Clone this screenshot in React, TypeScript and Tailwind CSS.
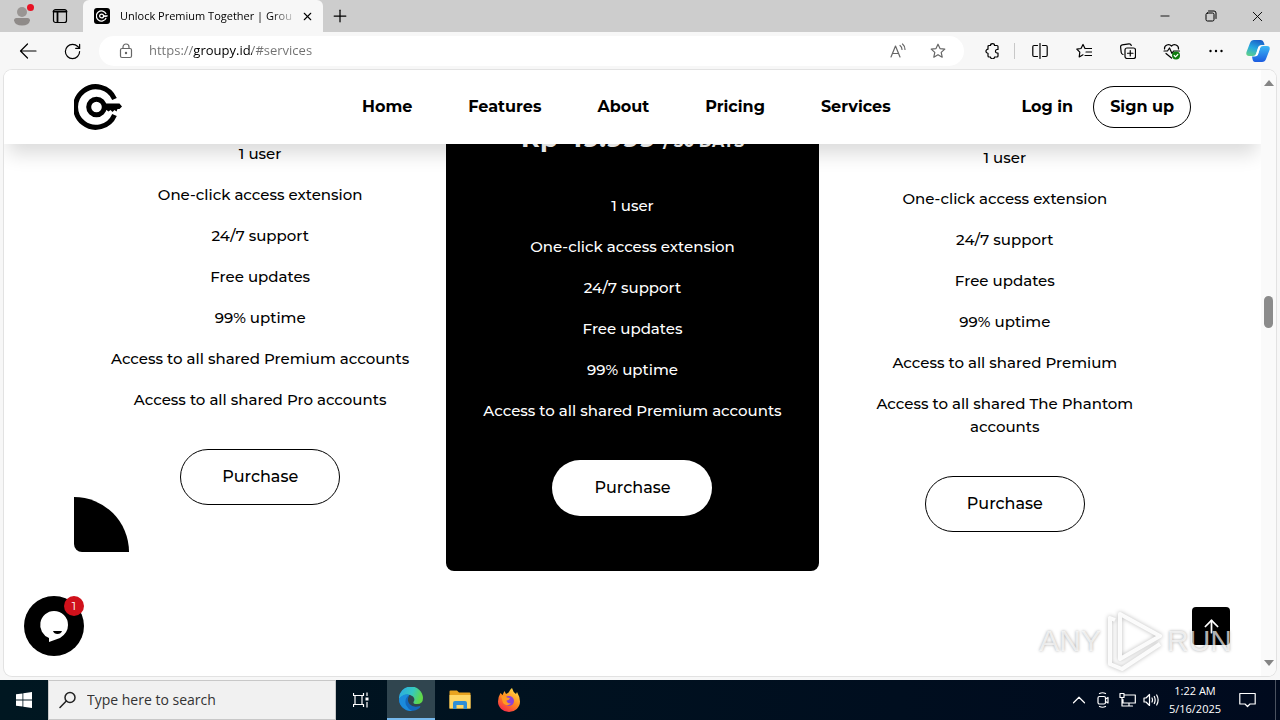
import React from 'react';
import { Plus, X, Minus, ArrowLeft, ArrowUp, RotateCw, ChevronUp } from 'lucide-react';

interface Plan {
  id: string;
  price?: string;
  period?: string;
  features: string[];
  featured?: boolean;
  accent?: boolean;
  spacing: string;
}

const common = ['1 user', 'One-click access extension', '24/7 support', 'Free updates', '99% uptime'];

const plans: Plan[] = [
  {
    id: 'pro',
    features: [...common, 'Access to all shared Premium accounts', 'Access to all shared Pro accounts'],
    accent: true,
    spacing: 'pt-[22px] pb-[47px]',
  },
  {
    id: 'premium',
    price: 'Rp 49.999',
    period: '/ 30 DAYS',
    features: [...common, 'Access to all shared Premium accounts'],
    featured: true,
    spacing: 'pb-[55px]',
  },
  {
    id: 'phantom',
    features: [...common, 'Access to all shared Premium', 'Access to all shared The Phantom accounts'],
    spacing: 'pt-[26px] pb-[47px]',
  },
];

const navLinks = ['Home', 'Features', 'About', 'Pricing', 'Services'];

function KeyLogo({ className }: { className?: string }) {
  return (
    <svg viewBox="0 0 48 48" className={className} fill="none" stroke="currentColor" aria-hidden="true">
      <path d="M40.500 16A20.300 20.300 0 1 0 40.500 32" strokeWidth="5" />
      <circle cx="22.500" cy="24" r="7.800" strokeWidth="5" />
      <path d="M30 20.500H45.500L48 23.500L45.500 26H43.500L42.500 28.500L40.500 27L38.500 29L36.500 27L34.500 28.500L32.500 27H30Z" fill="currentColor" stroke="none" />
    </svg>
  );
}

const line = {
  fill: 'none',
  stroke: 'currentColor',
  strokeWidth: 1.2,
  strokeLinecap: 'round' as const,
  strokeLinejoin: 'round' as const,
  'aria-hidden': true,
};

const starPath = 'M8 1.200L10 5.600L14.800 6.100L11.200 9.400L12.200 14.200L8 11.700L3.800 14.200L4.800 9.400L1.200 6.100L6 5.600Z';

function TabStrip() {
  return (
    <div className="flex h-8 items-stretch bg-[#cdcdcd]">
      <button aria-label="Profile" className="relative flex w-11 items-center justify-center">
        <svg viewBox="0 0 18 20" className="h-5 w-[18px]" fill="#8f8b89" aria-hidden="true">
          <circle cx="9" cy="6" r="5" fill="#999593" />
          <path d="M1 14.500Q1 12 3.500 12H14.500Q17 12 17 14.500Q16 19.500 9 19.500T1 14.500Z" />
        </svg>
        <span className="absolute right-2.5 top-1 h-[7px] w-[7px] rounded-full bg-[#e81224]" />
      </button>
      <button aria-label="Tab actions" className="flex w-[39px] items-center pl-2">
        <svg viewBox="0 0 16 16" className="h-4 w-4" {...line}>
          <rect x="1.500" y="1.500" width="13" height="13" rx="2" />
          <path d="M1.500 3.500H14.500M5.500 4V14" strokeWidth="1.800" />
        </svg>
      </button>
      <div className="flex w-60 items-center rounded-t-md bg-[#f7f7f7] pl-[11px] pr-2">
        <span className="mr-2.5 flex h-4 w-4 shrink-0 items-center justify-center rounded-[3px] bg-black text-white">
          <KeyLogo className="h-3 w-3" />
        </span>
        <span className="whitespace-nowrap text-[11px] [mask-image:linear-gradient(to_right,black_88%,rgba(0,0,0,0.2))]">
          Unlock Premium Together | Grou
        </span>
        <button aria-label="Close tab" className="ml-auto flex h-4 w-4 shrink-0 items-center justify-center">
          <X size={13} strokeWidth={2} />
        </button>
      </div>
      <button aria-label="New tab" className="flex w-[34px] items-center justify-center">
        <Plus size={20} strokeWidth={1.500} />
      </button>
      <div className="ml-auto flex">
        <button aria-label="Minimize" className="flex w-[46px] items-center justify-center">
          <Minus size={14} strokeWidth={1.500} />
        </button>
        <button aria-label="Restore" className="flex w-[46px] items-center justify-center">
          <svg viewBox="0 0 12 12" className="h-3 w-3" {...line} strokeWidth="1">
            <rect x="1" y="3" width="8" height="8" rx="1.500" />
            <path d="M3.500 1H9Q11 1 11 3V8.500" />
          </svg>
        </button>
        <button aria-label="Close" className="flex w-[46px] items-center justify-center">
          <X size={17} strokeWidth={1.300} />
        </button>
      </div>
    </div>
  );
}

const toolButton = 'flex h-8 w-11 shrink-0 items-center justify-center';

function Toolbar() {
  return (
    <div className="flex h-[38px] items-center bg-[#f7f7f7] pl-1.5 pr-0.5">
      <button aria-label="Back" className={toolButton}>
        <svg viewBox="0 0 18 16" className="h-4 w-[18px]" {...line}>
          <path d="M17 8H1.500M8.500 1L1.500 8L8.500 15" />
        </svg>
      </button>
      <button aria-label="Refresh" className={toolButton}>
        <RotateCw size={19} strokeWidth={1.500} />
      </button>
      <div className="ml-[5px] mr-1.5 flex h-[30px] flex-1 items-center rounded-full bg-white pl-5 pr-[18px] text-[#666]">
        <svg viewBox="0 0 14 16" className="mr-4 h-4 w-3.5" {...line}>
          <rect x="1.500" y="5.500" width="11" height="9" rx="1.500" />
          <path d="M4 5.500V4A3 3 0 0 1 10 4V5.500" />
          <circle cx="7" cy="10" r="0.600" fill="currentColor" />
        </svg>
        <input
          aria-label="Address"
          defaultValue="https://groupy.id/#services"
          className="min-w-0 flex-1 bg-[linear-gradient(to_right,#707070_44px,#000_44px,#000_103px,#707070_103px)] bg-clip-text text-[13px] text-transparent outline-none"
        />
        <button aria-label="Read aloud" className="mr-6">
          <svg viewBox="0 0 16 16" className="h-4 w-4" {...line}>
            <path d="M1 14L5.500 3L10 14M2.500 10.500H8.500M10 2.500Q12 4 12 6.500M12.500 1Q15 3 15 6.500" />
          </svg>
        </button>
        <button aria-label="Add to favorites">
          <svg viewBox="0 0 16 16" className="h-4 w-4" {...line}>
            <path d={starPath} />
          </svg>
        </button>
      </div>
      <button aria-label="Extensions" className={toolButton}>
        <svg viewBox="0 0 16 16" className="h-4 w-4" {...line}>
          <path d="M5 2.500H6.500A2 1.800 0 0 1 10.500 2.500H13Q14 2.500 14 3.500V6.500H12.800A1.800 1.800 0 0 0 12.800 10H14V13Q14 14 13 14H10.500A2 1.800 0 0 1 6.500 14H5Q4 14 4 13V10.300A2 2 0 0 1 4 6.200V3.500Q4 2.500 5 2.500Z" />
        </svg>
      </button>
      <span className="h-4 w-1 shrink-0 border-l border-[#c8c8c8]" />
      <button aria-label="Split screen" className={toolButton}>
        <svg viewBox="0 0 16 16" className="h-4 w-4" {...line}>
          <path d="M8 0.500V15.500M5.500 2.500H2Q0.800 2.500 0.800 3.700V12.300Q0.800 13.500 2 13.500H5.500M10.500 2.500H14Q15.200 2.500 15.200 3.700V12.300Q15.200 13.500 14 13.500H10.500" />
        </svg>
      </button>
      <button aria-label="Favorites" className={toolButton}>
        <svg viewBox="0 0 16 16" className="h-4 w-4" {...line}>
          <path d="M9 5.500L7 1.500L5 5.500L0.800 6.100L3.800 9.200L3.200 14L7 11.800M9 5.500H15.500M10 9H15.500M9 12.500H15.500" />
        </svg>
      </button>
      <button aria-label="Collections" className={toolButton}>
        <svg viewBox="0 0 16 16" className="h-4 w-4" {...line}>
          <rect x="5" y="5" width="10.500" height="10.500" rx="2" />
          <path d="M10.250 7.500V13M7.500 10.250H13M3 11.500Q1.500 11 1.200 9.500L0.600 4Q0.500 2.200 2.200 1.800L9 0.800Q10.800 0.700 11.300 2.500" />
        </svg>
      </button>
      <button aria-label="Browser essentials" className={toolButton}>
        <svg viewBox="0 0 18 17" className="h-[17px] w-[18px]" {...line}>
          <path d="M1.500 6A4 4 0 0 1 8.500 3A4 4 0 0 1 15.500 6M1 8H4.500L6.500 5L9 10.500L10.500 8H16.500M3 10.500L8.500 15" />
          <circle cx="13" cy="12.500" r="4" fill="#107c10" stroke="none" />
          <path d="M11.200 12.500L12.500 13.800L14.800 11.500" stroke="#fff" />
        </svg>
      </button>
      <button aria-label="Settings and more" className={toolButton}>
        <svg viewBox="0 0 16 16" className="h-4 w-4" aria-hidden="true">
          <circle cx="2.500" cy="8" r="1.200" />
          <circle cx="8" cy="8" r="1.200" />
          <circle cx="13.500" cy="8" r="1.200" />
        </svg>
      </button>
      <button aria-label="Copilot" className="flex w-10 shrink-0 items-center justify-center">
        <svg viewBox="0 0 24 22" className="h-[22px] w-6" aria-hidden="true">
          <defs>
            <linearGradient id="copilot-a" x1="0.600" y1="0" x2="0.200" y2="1">
              <stop offset="0" stopColor="#1b62c9" />
              <stop offset="0.500" stopColor="#27a8e0" />
              <stop offset="1" stopColor="#5fd08a" />
            </linearGradient>
            <linearGradient id="copilot-b" x1="0" y1="0" x2="0" y2="1">
              <stop offset="0" stopColor="#3bb8f5" />
              <stop offset="1" stopColor="#1c5be0" />
            </linearGradient>
          </defs>
          <path d="M8 0H15Q17 0 18 3L18.500 5H15Q13 5 12 8L10 14Q9 16 7 16H3Q-0.500 16 0.500 12L4 3Q5 0 8 0Z" fill="url(#copilot-a)" />
          <path d="M16 22H9Q7 22 6.500 19L6 16.500H9Q11 16.500 12 14L14 8Q15 6 17 6H21Q24.500 6 23.500 10L20 19Q19 22 16 22Z" fill="url(#copilot-b)" />
          <path d="M12.500 6.500H14.500L12 14.500Q11.500 16 9.500 16L12 8Z" fill="#fff" />
        </svg>
      </button>
    </div>
  );
}

function SiteHeader() {
  return (
    <header className="relative z-10 flex h-[74px] shrink-0 items-center bg-white px-[70px] text-base font-bold shadow-[0_14px_18px_-4px_rgba(0,0,0,0.14)]">
      <a href="#home" aria-label="Groupy">
        <KeyLogo className="h-12 w-12" />
      </a>
      <nav className="ml-60 flex gap-14">
        {navLinks.map((link) => (
          <a key={link} href={`#${link.toLowerCase()}`}>
            {link}
          </a>
        ))}
      </nav>
      <div className="ml-auto flex items-center gap-5">
        <a href="#login">Log in</a>
        <a href="#signup" className="flex h-[42px] items-center rounded-full border border-black px-4">
          Sign up
        </a>
      </div>
    </header>
  );
}

function PlanCard({ plan }: { plan: Plan }) {
  return (
    <article
      className={`relative flex flex-col items-center rounded-b-lg px-8 text-center ${plan.spacing} ${
        plan.featured ? 'bg-black text-white' : 'bg-white text-black'
      }`}
    >
      {plan.price && (
        <h3 className="mb-[38px] whitespace-nowrap text-[26px] font-bold leading-9">
          {plan.price} <span className="text-base leading-none">{plan.period}</span>
        </h3>
      )}
      <ul className="mb-[38px] flex flex-col gap-[18px] text-[15px] font-medium leading-[23px]">
        {plan.features.map((feature) => (
          <li key={feature}>{feature}</li>
        ))}
      </ul>
      <button
        className={`h-14 w-40 rounded-full text-base font-medium text-black ${
          plan.featured ? 'bg-white' : 'border border-black'
        }`}
      >
        Purchase
      </button>
      {plan.accent && <span className="absolute bottom-0 left-0 h-[55px] w-[55px] rounded-bl-lg rounded-tr-[55px] bg-black" />}
    </article>
  );
}

function ChatButton() {
  return (
    <button aria-label="Open chat" className="absolute bottom-5 left-5 h-[60px] w-[60px] rounded-full bg-black">
      <svg viewBox="0 0 60 60" className="h-full w-full" aria-hidden="true">
        <path d="M30 15A14 14 0 0 1 44 29Q44 37 36 42L25 46V42A14 14 0 0 1 30 15Z" fill="#fff" />
        <path d="M29 35H38Q37 38 33.500 38T29 35Z" fill="#000" />
      </svg>
      <span className="absolute right-0 top-0 flex h-5 w-5 items-center justify-center rounded-full bg-[#d0111b] text-xs text-white">1</span>
    </button>
  );
}

function Watermark() {
  return (
    <div className="pointer-events-none absolute bottom-1 right-11 z-20 flex items-center gap-1 font-['Liberation_Sans',sans-serif] text-3xl leading-none text-white/70 [text-shadow:0_0_3px_rgba(0,0,0,0.35)]">
      <span>ANY</span>
      <svg viewBox="0 0 58 62" className="h-[62px] w-[58px] drop-shadow-[0_0_2px_rgba(0,0,0,0.3)]" fill="none" stroke="#fff" strokeOpacity="0.900" strokeWidth="4" strokeLinejoin="round" aria-hidden="true">
        <path d="M15 4L55 26L15 49Z" />
        <path d="M10 10L5 8V54L17 59L55 34" />
      </svg>
      <span>RUN</span>
    </div>
  );
}

function Scrollbar() {
  return (
    <div className="flex w-[15px] shrink-0 flex-col items-center bg-[#fafafa] py-2.5 text-[#858585]" aria-hidden="true">
      <svg viewBox="0 0 10 6" className="h-1.5 w-2.5" fill="currentColor">
        <path d="M5 0L10 6H0Z" />
      </svg>
      <span className="mt-[210px] h-8 w-[9px] rounded-full bg-[#8b8b8b]" />
      <svg viewBox="0 0 10 6" className="mt-auto h-1.5 w-2.5" fill="currentColor">
        <path d="M0 0H10L5 6Z" />
      </svg>
    </div>
  );
}

function Taskbar() {
  return (
    <footer className="flex h-10 shrink-0 items-stretch bg-linear-to-r from-[#001721] to-[#000a1e] text-white">
      <button aria-label="Start" className="flex w-12 items-center justify-center">
        <svg viewBox="0 0 16 16" className="h-4 w-4" fill="#fff" aria-hidden="true">
          <path d="M0 2.300L6.500 1.400V7.600H0ZM7.300 1.300L16 0V7.600H7.300ZM0 8.400H6.500V14.600L0 13.700ZM7.300 8.400H16V16L7.300 14.700Z" />
        </svg>
      </button>
      <label className="flex w-72 items-center border border-[#c8c8c8] bg-[#f1f1f1] pl-2.5 text-[#222]">
        <svg viewBox="0 0 18 18" className="mr-2.5 h-[18px] w-[18px]" {...line} strokeWidth="1.500">
          <circle cx="11" cy="6.500" r="5" />
          <path d="M7.300 10L1 16.500" />
        </svg>
        <input aria-label="Search" placeholder="Type here to search" className="min-w-0 flex-1 text-sm outline-none placeholder:text-[#333]" />
      </label>
      <button aria-label="Task view" className="flex w-[51px] items-center justify-center pr-0.5">
        <svg viewBox="0 0 16 16" className="h-4 w-4" {...line} strokeLinecap="butt">
          <path d="M0.500 1V3.500H10.500V1M0.500 15V12.500H10.500V15M2 3.500V12.500M9 3.500V12.500M14 0.500V4M14 10V15.500" />
          <path d="M14 5.500V8.500" strokeWidth="3" />
        </svg>
      </button>
      <button aria-label="Microsoft Edge" className="flex w-12 items-center justify-center border-b-2 border-[#76b9ed] bg-[#30454f]">
        <svg viewBox="0 0 24 24" className="h-6 w-6" aria-hidden="true">
          <defs>
            <linearGradient id="edge-top" x1="0" y1="0" x2="1" y2="0.300">
              <stop offset="0" stopColor="#2aa6e8" />
              <stop offset="0.600" stopColor="#35c8c0" />
              <stop offset="1" stopColor="#5fd84a" />
            </linearGradient>
          </defs>
          <path d="M12 0A12 12 0 0 0 0 12A12 12 0 0 0 12 24Q17 24 20.500 21Q22 19.500 21 19Q14 21 10.500 17Q7.500 13 10 9Z" fill="#1368bd" />
          <path d="M0 12A12 12 0 0 1 24 11Q24 17 18 17Q14 17 14.500 15Q16.500 12 14 9.500Q7 4.500 0 12Z" fill="url(#edge-top)" />
          <path d="M0 12Q4 6 10 8Q5 12 7 18Q9 22 13 24A12 12 0 0 1 0 12Z" fill="#1b8bdc" />
        </svg>
      </button>
      <button aria-label="File Explorer" className="flex w-[49px] items-center justify-center">
        <svg viewBox="0 0 22 20" className="h-5 w-[22px]" aria-hidden="true">
          <path d="M0.500 1.500Q0.500 0.500 1.500 0.500H8L10 2.500H20.500Q21.500 2.500 21.500 3.500V18.500H0.500Z" fill="#e8a420" />
          <path d="M0.500 5H21.500V18.500H0.500Z" fill="#ffd766" />
          <path d="M4 19V13Q4 11 6 11H16Q18 11 18 13V19H14.500V15H7.500V19Z" fill="#2f8fd6" />
        </svg>
      </button>
      <button aria-label="Firefox" className="flex w-[49px] items-center justify-center">
        <svg viewBox="0 0 22 24" className="h-6 w-[22px]" aria-hidden="true">
          <defs>
            <linearGradient id="fox" x1="0.800" y1="0" x2="0.200" y2="1">
              <stop offset="0" stopColor="#ffe14a" />
              <stop offset="0.500" stopColor="#ff8a1e" />
              <stop offset="1" stopColor="#f5224e" />
            </linearGradient>
          </defs>
          <path d="M14 0Q15 4 18 6L19 4Q22 9 22 13.500A11 10.500 0 0 1 0 13.500Q0 9 2.500 5L4.500 7L6.500 3L8 6Q11 5 11.500 3Q12.500 1 14 0Z" fill="url(#fox)" />
          <circle cx="11" cy="13" r="5" fill="#8a43d6" />
          <path d="M3 8Q7 7 9 9.500L12 10Q11 12.500 8.500 12.500Q9 15.500 13 15.500Q8 19 5 15Z" fill="#ff9a22" />
        </svg>
      </button>
      <div className="ml-auto flex items-center">
        <button aria-label="Show hidden icons" className="flex w-6 justify-center">
          <ChevronUp size={22} strokeWidth={1.300} />
        </button>
        <button aria-label="Meet now" className="flex w-6 justify-center">
          <svg viewBox="0 0 14 16" className="h-4 w-3.5" {...line}>
            <rect x="2" y="4.500" width="7.500" height="7.500" rx="1.500" />
            <path d="M9.500 7L12 5.500V11L9.500 9.500M3.500 1.500Q6.500 0 9.500 1.500M3.500 14.500Q6.500 16 9.500 14.500" />
          </svg>
        </button>
        <button aria-label="Network" className="flex w-6 justify-center">
          <svg viewBox="0 0 17 16" className="h-4 w-[17px]" {...line}>
            <path d="M5.500 3H16.300V11H4V7.500M10 11V14M6.500 14H13.500M1 1.500H5V5.500H1ZM3 5.500V14H6" />
          </svg>
        </button>
        <button aria-label="Volume" className="flex w-6 justify-center">
          <svg viewBox="0 0 17 16" className="h-4 w-[17px]" {...line}>
            <path d="M1 6H3L6.500 2.500V13.500L3 10H1ZM9 6Q10 8 9 10M11.300 4.500Q13 8 11.300 11.500M13.700 3Q16.500 8 13.700 13" />
          </svg>
        </button>
        <time className="w-16 text-center text-[11px] leading-[18px]">
          1:22 AM
          <br />
          5/16/2025
        </time>
        <button aria-label="Notifications" className="flex w-10 justify-center">
          <svg viewBox="0 0 17 16" className="h-4 w-[17px]" {...line}>
            <path d="M0.800 1.500H16.200V12H11L8.500 14.500L6 12H0.800Z" />
          </svg>
        </button>
        <span className="ml-2 h-10 w-[5px] border-l border-[#4a5260]" />
      </div>
    </footer>
  );
}

export default function App() {
  return (
    <div className="flex h-screen flex-col overflow-hidden bg-[#f7f7f7] font-['Open_Sans','Noto_Sans',sans-serif] text-black">
      <TabStrip />
      <Toolbar />
      <div className="relative mx-1 mb-1 flex min-h-0 flex-1 overflow-hidden rounded-lg bg-white ring-1 ring-[#e2e2e2]">
        <div className="relative flex min-w-0 flex-1 flex-col overflow-hidden font-['Montserrat',sans-serif]">
          <SiteHeader />
          <main className="-mt-6 grid grid-cols-3 items-start px-[70px]">
            {plans.map((plan) => (
              <PlanCard key={plan.id} plan={plan} />
            ))}
          </main>
          <ChatButton />
          <button aria-label="Back to top" className="absolute bottom-[31px] right-[31px] flex h-[38px] w-[38px] items-center justify-center rounded bg-black text-white">
            <ArrowUp size={21} strokeWidth={2} />
          </button>
        </div>
        <Scrollbar />
        <Watermark />
      </div>
      <Taskbar />
    </div>
  );
}
